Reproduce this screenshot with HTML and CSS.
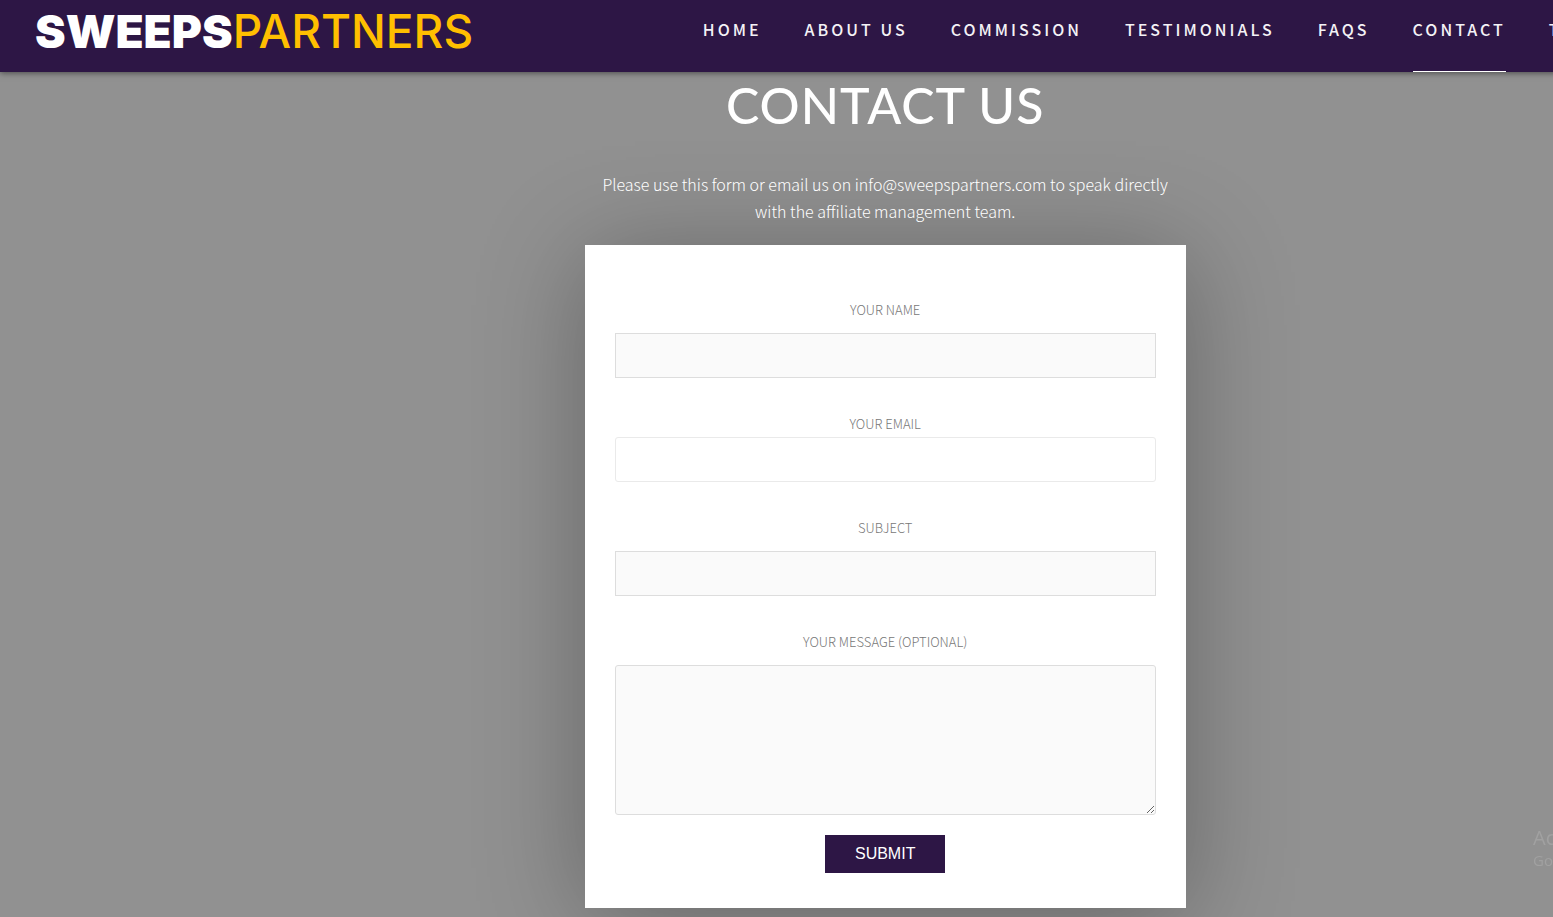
FILE: index.html
```html
<!DOCTYPE html>
<html lang="en">
<head>
    <meta charset="UTF-8">
    <meta name="viewport" content="width=device-width, initial-scale=1.0">
    <title>Sweeps Partners - Contact</title>
    <link rel="stylesheet" href="styles.css">
</head>
<body>
    <div class="page">
        <header class="header">
            <a class="logo" href="#home"><strong>SWEEPS</strong><span>PARTNERS</span></a>
            <nav class="nav">
                <a href="#home">HOME</a>
                <a href="#about">ABOUT US</a>
                <a href="#commission">COMMISSION</a>
                <a href="#testimonials">TESTIMONIALS</a>
                <a href="#faqs">FAQS</a>
                <a class="active" href="#contact">CONTACT</a>
                <a href="#terms">TERMS</a>
            </nav>
        </header>

        <main class="contact" id="contact">
            <h1>CONTACT US</h1>
            <p class="intro">Please use this form or email us on info@sweepspartners.com to speak directly with the affiliate management team.</p>

            <form class="contact-form">
                <div class="form-group">
                    <label for="name">YOUR NAME</label>
                    <input type="text" id="name" name="name">
                </div>
                <div class="form-group email">
                    <label for="email">YOUR EMAIL</label>
                    <input type="email" id="email" name="email">
                </div>
                <div class="form-group">
                    <label for="subject">SUBJECT</label>
                    <input type="text" id="subject" name="subject">
                </div>
                <div class="form-group">
                    <label for="message">YOUR MESSAGE (OPTIONAL)</label>
                    <textarea id="message" name="message"></textarea>
                </div>
                <button type="submit">SUBMIT</button>
            </form>
        </main>
    </div>

    <div class="watermark">
        <p class="watermark-title">Activate Windows</p>
        <p>Go to Settings</p>
    </div>
</body>
</html>
```
FILE: styles.css
```css
* {
    margin: 0;
    padding: 0;
    box-sizing: border-box;
}

html {
    overflow-x: hidden;
}

body {
    background-color: #919191;
    color: white;
    font-family: "Noto Sans CJK JP", "Noto Sans", sans-serif;
    overflow-x: hidden;
}

.page {
    width: 114vw;
    min-height: 100vh;
}

.header {
    display: flex;
    height: 72px;
    padding-left: 35px;
    background-color: #2d1645;
    box-shadow: 0 1px 6px rgba(0, 0, 0, 0.5);
}

.logo {
    flex: 0 0 43vw;
    color: #ffbf00;
    font-family: Inter, sans-serif;
    font-size: 46px;
    font-weight: 500;
    line-height: 62px;
    text-decoration: none;
}

.logo strong {
    color: white;
    font-weight: 900;
}

.nav {
    display: flex;
    gap: 43px;
}

.nav a {
    color: #f4f2f6;
    font-size: 16px;
    font-weight: 500;
    letter-spacing: 3px;
    line-height: 58px;
    text-decoration: none;
    white-space: nowrap;
    border-bottom: 1px solid transparent;
}

.nav a.active {
    border-bottom-color: white;
}

.contact {
    width: 601px;
    max-width: 100%;
    margin: 0 auto;
    padding-bottom: 9px;
    text-align: center;
}

.contact h1 {
    margin-bottom: 32px;
    font-family: Lato, sans-serif;
    font-size: 50px;
    font-weight: 500;
    letter-spacing: 1px;
    line-height: 67px;
}

.intro {
    margin-bottom: 20px;
    padding: 0 15px;
    font-size: 16px;
    font-weight: 300;
    line-height: 27px;
}

.contact-form {
    padding: 52px 30px 35px;
    background: white;
    box-shadow: 0 10px 100px rgba(0, 0, 0, 0.3);
}

.form-group {
    margin-bottom: 33px;
}

.form-group:last-of-type {
    margin-bottom: 20px;
}

label {
    display: block;
    margin-bottom: 10px;
    color: #777;
    font-size: 13px;
    font-weight: 300;
    line-height: 26px;
}

input,
textarea {
    display: block;
    width: 100%;
    height: 45px;
    padding: 10px;
    background-color: #fafafa;
    border: 1px solid #ddd;
    font-family: inherit;
    font-size: 16px;
}

textarea {
    height: 150px;
    border-radius: 3px;
    resize: vertical;
}

.email label {
    margin-bottom: 0;
}

.email input {
    background-color: white;
    border-color: #eaeaea;
    border-radius: 3px;
}

button {
    width: 120px;
    height: 38px;
    background-color: #2d1645;
    border: none;
    color: white;
    font-family: "Liberation Sans", Arial, sans-serif;
    font-size: 16px;
    cursor: pointer;
}

.watermark {
    position: fixed;
    left: calc(100% - 20px);
    bottom: 47px;
    color: #a1a1a1;
    font-family: "Open Sans", sans-serif;
    font-size: 15px;
    line-height: 20px;
    white-space: nowrap;
    pointer-events: none;
}

.watermark-title {
    font-size: 20px;
    line-height: 24px;
}
```
